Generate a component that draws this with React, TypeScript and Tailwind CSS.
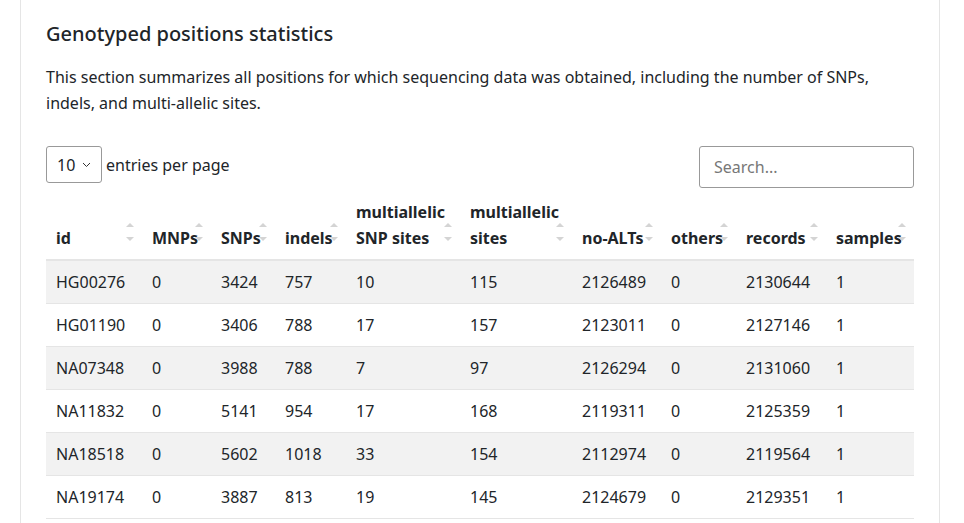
const cols = [
  { label: ["", "id"], w: "w-[96px]" },
  { label: ["", "MNPs"], w: "w-[69px]" },
  { label: ["", "SNPs"], w: "w-[64px]" },
  { label: ["", "indels"], w: "w-[71px]" },
  { label: ["multiallelic", "SNP sites"], w: "w-[114px]" },
  { label: ["multiallelic", "sites"], w: "w-[112px]" },
  { label: ["", "no-ALTs"], w: "w-[89px]" },
  { label: ["", "others"], w: "w-[75px]" },
  { label: ["", "records"], w: "w-[90px]" },
  { label: ["", "samples"], w: "w-[88px]" },
];

const rows = [
  ["HG00276", "0", "3424", "757", "10", "115", "2126489", "0", "2130644", "1"],
  ["HG01190", "0", "3406", "788", "17", "157", "2123011", "0", "2127146", "1"],
  ["NA07348", "0", "3988", "788", "7", "97", "2126294", "0", "2131060", "1"],
  ["NA11832", "0", "5141", "954", "17", "168", "2119311", "0", "2125359", "1"],
  ["NA18518", "0", "5602", "1018", "33", "154", "2112974", "0", "2119564", "1"],
  ["NA19174", "0", "3887", "813", "19", "145", "2124679", "0", "2129351", "1"],
];

function SortArrows() {
  return (
    <span className="absolute right-[8px] top-[24px] flex flex-col gap-[10px]">
      <span className="w-0 h-0 border-x-[4px] border-x-transparent border-b-[4px] border-b-[#d4d4d4]" />
      <span className="w-0 h-0 border-x-[4px] border-x-transparent border-t-[4px] border-t-[#d4d4d4]" />
    </span>
  );
}

export default function App() {
  return (
    <div className="w-[964px] h-[523px] overflow-hidden bg-white font-['Liberation_Sans',Arial,sans-serif] text-[#212529]">
      <div className="ml-[20px] w-[920px] h-full border-x border-[#e5e5e5] px-[25px] pt-[20px]">
        <h2 className="text-[20px] font-medium leading-[28px]">Genotyped positions statistics</h2>
        <p className="mt-[16px] text-[16px] leading-[26px] pr-[20px]">
          This section summarizes all positions for which sequencing data was obtained, including the number of SNPs,
          indels, and multi-allelic sites.
        </p>
        <div className="mt-[25px] flex items-center justify-between w-[868px]">
          <div className="flex items-center gap-[4px] text-[16px]">
            <div className="w-[56px] h-[37px] border border-[#999] rounded-[3px] flex items-center justify-between px-[10px]">
              <span>10</span>
              <svg width="9" height="6" viewBox="0 0 9 6"><path d="M1 1l3.5 3.5L8 1" fill="none" stroke="#333" strokeWidth="1" /></svg>
            </div>
            <span>entries per page</span>
          </div>
          <div className="w-[215px] h-[42px] mt-[5px] border border-[#999] rounded-[3px] flex items-center px-[14px] text-[16px] text-[#777]">
            Search...
          </div>
        </div>
        <table className="mt-[11px] w-[868px] table-fixed border-collapse text-[16px]">
          <thead>
            <tr className="border-b-2 border-[#e5e5e5]">
              {cols.map((c, i) => (
                <th key={i} className={`${c.w} relative text-left font-bold align-bottom px-[10px] pb-[8px] leading-[26px]`}>
                  <div className="h-[26px]">{c.label[0]}</div>
                  <div>{c.label[1]}</div>
                  <SortArrows />
                </th>
              ))}
            </tr>
          </thead>
          <tbody>
            {rows.map((r, i) => (
              <tr key={i} className={`h-[43px] border-b border-[#e5e5e5] ${i % 2 === 0 ? "bg-[#f2f2f2]" : ""}`}>
                {r.map((v, j) => (
                  <td key={j} className="px-[10px] whitespace-nowrap">{v}</td>
                ))}
              </tr>
            ))}
          </tbody>
        </table>
      </div>
    </div>
  );
}
